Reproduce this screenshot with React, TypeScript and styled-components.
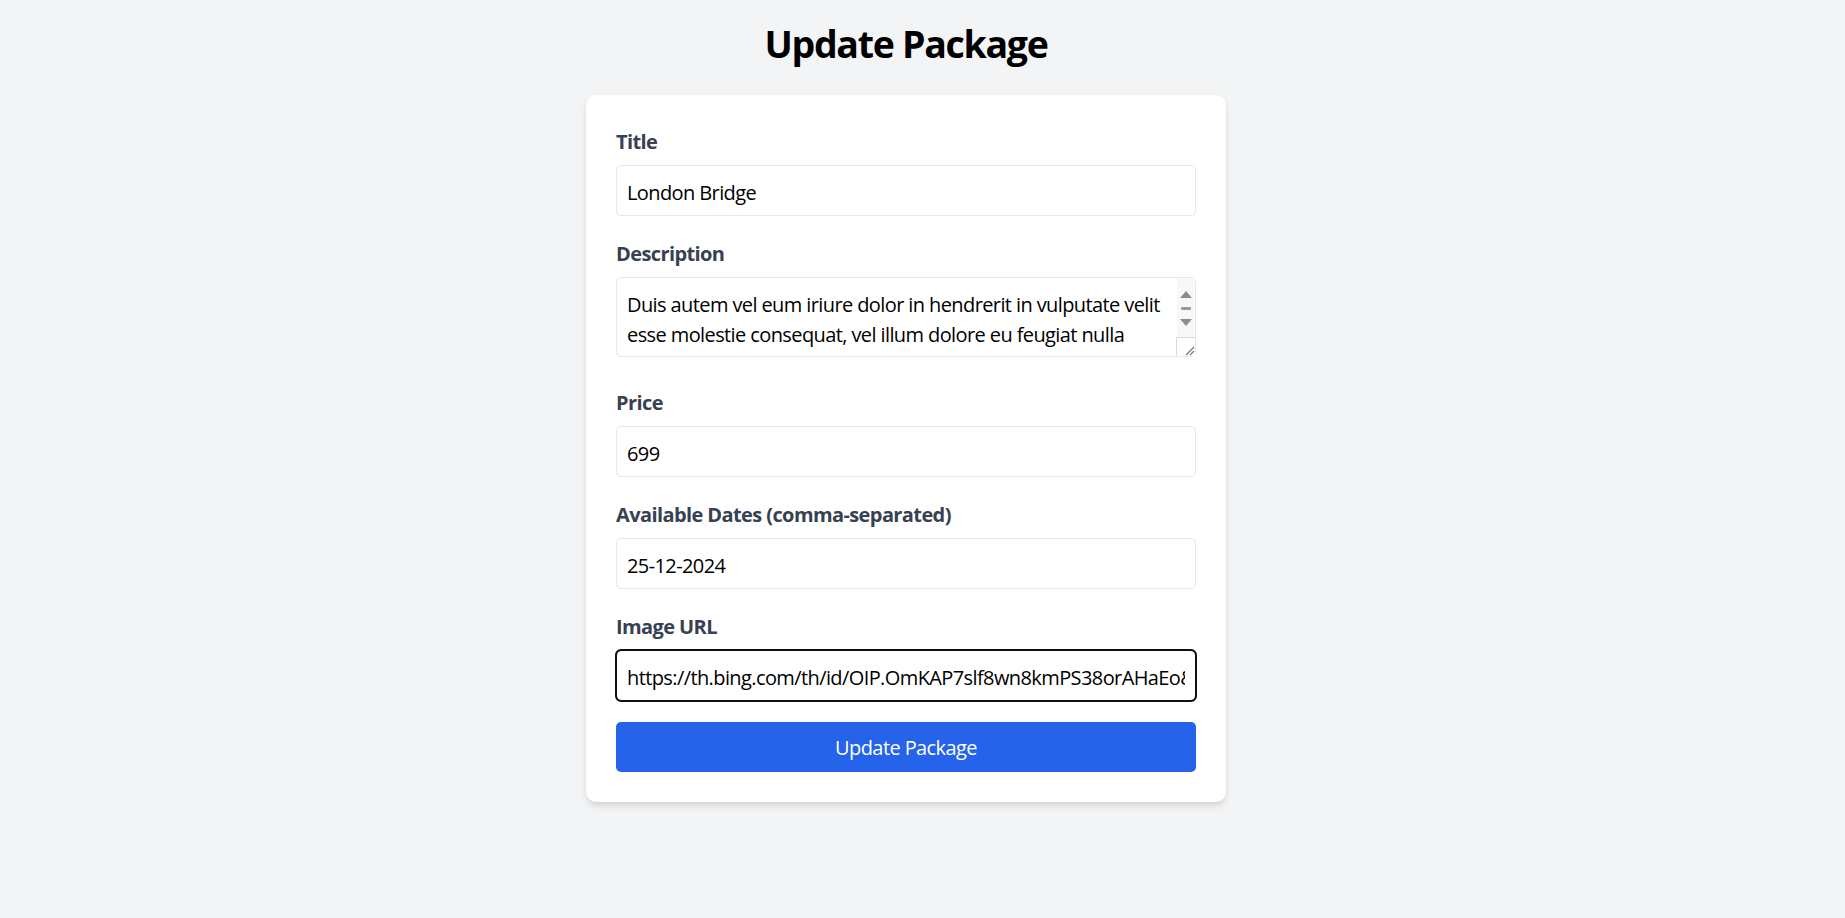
import React, { useState } from 'react'
import styled, { createGlobalStyle } from 'styled-components';

const GlobalStyle = createGlobalStyle`
  * {
    box-sizing: border-box;
  }
  body {
    margin: 0;
    background: #f3f4f6;
    font-family: "Open Sans", "Noto Sans", sans-serif;
  }
`

const Page = styled.div`
    min-height: 100vh;
    padding: 21px 33px 40px 0;
`

const Heading = styled.h1`
    margin: 0 0 29px;
    text-align: center;
    font-size: 37.5px;
    line-height: 45px;
    font-weight: 700;
    letter-spacing: -1.3px;
    color: #000;
`

const Card = styled.form`
    width: 640px;
    margin: 0 auto;
    padding: 30px;
    background: #ffffff;
    border-radius: 10px;
    box-shadow: 0 5px 8px -1px rgba(0, 0, 0, 0.1), 0 2px 5px -2px rgba(0, 0, 0, 0.1);
    display: flex;
    flex-direction: column;
    letter-spacing: -0.6px;
`

const Field = styled.div<{ $extra?: number }>`
    display: flex;
    flex-direction: column;
    margin-bottom: ${p => 21 + (p.$extra || 0)}px;
`

const Label = styled.label`
    display: block;
    padding-top: 2px;
    margin-bottom: 8px;
    font-size: 20px;
    line-height: 30px;
    font-weight: 700;
    color: #374151;
`

const Input = styled.input<{ $focused?: boolean }>`
    width: 100%;
    height: 51px;
    padding: 12px 10px 8px;
    font-family: inherit;
    font-size: 20px;
    line-height: 30px;
    letter-spacing: inherit;
    color: #000;
    background: #fff;
    border: 1px solid #e5e7eb;
    border-radius: 5px;
    outline: ${p => p.$focused ? '2px solid #101010' : 'none'};
    outline-offset: -1px;
    border-color: ${p => p.$focused ? '#101010' : '#e5e7eb'};
`

const AreaWrap = styled.div`
    position: relative;
    height: 80px;
`

const TextArea = styled.textarea`
    display: block;
    width: 100%;
    height: 80px;
    padding: 12px 28px 8px 10px;
    font-family: inherit;
    font-size: 20px;
    line-height: 30px;
    letter-spacing: inherit;
    color: #000;
    border: 1px solid #e5e7eb;
    border-radius: 5px;
    overflow: hidden;
    resize: none;
    outline: none;
`

const ScrollBar = styled.div`
    position: absolute;
    top: 1px;
    right: 1px;
    bottom: 1px;
    width: 18px;
    display: flex;
    flex-direction: column;
    background: #f8f8f8;
    border-top-right-radius: 4px;
    border-bottom-right-radius: 4px;
`

const Track = styled.div`
    flex: 1;
    display: flex;
    flex-direction: column;
    align-items: center;
    padding-top: 13px;
    gap: 9px;
`

const Thumb = styled.div`
    width: 10px;
    height: 3px;
    background: #9a9a9a;
    border-radius: 1px;
`

const Resizer = styled.div`
    height: 19px;
    border-top: 1px solid #dcdcdc;
    border-left: 1px solid #dcdcdc;
    margin-left: -1px;
    display: flex;
    align-items: flex-end;
    justify-content: flex-end;
    background: #fff;
`

const SubmitButton = styled.button`
    height: 50px;
    width: 100%;
    padding: 1px 0 0;
    border: 0;
    border-radius: 5px;
    background: #2563eb;
    color: #ffffff;
    font-family: inherit;
    font-size: 20px;
    line-height: 30px;
    letter-spacing: inherit;
    cursor: pointer;
`

const Arrow = ({ up }: { up?: boolean }) => (
    <svg width="12" height="7" viewBox="0 0 12 7">
        <path d={up ? 'M0 7 L6 0 L12 7 Z' : 'M0 0 L6 7 L12 0 Z'} fill="#8c8c8c" />
    </svg>
)

const description = 'Duis autem vel eum iriure dolor in hendrerit in vulputate velit esse molestie consequat, vel illum dolore eu feugiat nulla facilisis at vero eros et accumsan et iusto odio dignissim qui blandit praesent luptatum zzril delenit augue duis dolore te feugait nulla facilisi.'

export default function App() {
    const [form, setForm] = useState({
        title: 'London Bridge',
        description,
        price: '699',
        dates: '25-12-2024',
        image: 'https://th.bing.com/th/id/OIP.OmKAP7slf8wn8kmPS38orAHaEo&w=474&h=474',
    })

    const change = (key: string) => (e: React.ChangeEvent<HTMLInputElement | HTMLTextAreaElement>) =>
        setForm({ ...form, [key]: e.target.value })

    return (
        <Page>
            <GlobalStyle />
            <Heading>Update Package</Heading>
            <Card onSubmit={e => e.preventDefault()}>
                <Field>
                    <Label>Title</Label>
                    <Input value={form.title} onChange={change('title')} />
                </Field>
                <Field $extra={8}>
                    <Label>Description</Label>
                    <AreaWrap>
                        <TextArea value={form.description} onChange={change('description')} />
                        <ScrollBar>
                            <Track>
                                <Arrow up />
                                <Thumb />
                                <Arrow />
                            </Track>
                            <Resizer>
                                <svg width="12" height="12" viewBox="0 0 12 12">
                                    <path d="M3 11 L11 3 M7 11 L11 7" stroke="#7a7a7a" strokeWidth="1.2" />
                                </svg>
                            </Resizer>
                        </ScrollBar>
                    </AreaWrap>
                </Field>
                <Field>
                    <Label>Price</Label>
                    <Input value={form.price} onChange={change('price')} />
                </Field>
                <Field>
                    <Label>Available Dates (comma-separated)</Label>
                    <Input value={form.dates} onChange={change('dates')} />
                </Field>
                <Field>
                    <Label>Image URL</Label>
                    <Input $focused value={form.image} onChange={change('image')} />
                </Field>
                <SubmitButton type="submit">Update Package</SubmitButton>
            </Card>
        </Page>
    )
}
